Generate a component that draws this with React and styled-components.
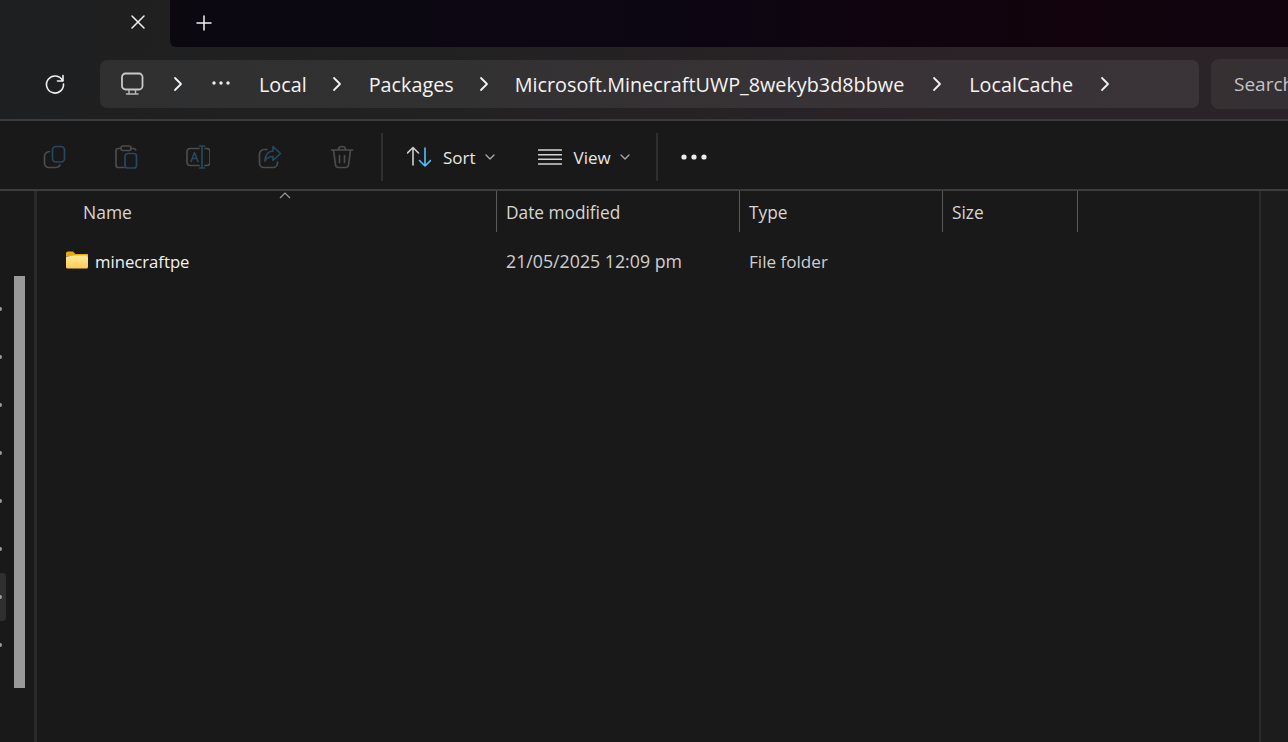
import React from 'react';
import styled, { createGlobalStyle } from 'styled-components';

const GRAY = '#4c4c4c';
const BLUE = '#25495f';
const ACCENT = '#4cc2ff';
const FONT = `'Open Sans', 'Noto Sans', sans-serif`;

const GlobalStyle = createGlobalStyle`
  html, body {
    margin: 0;
    padding: 0;
    height: 100%;
    overflow: hidden;
    background: #191919;
  }
  #root { height: 100%; }
`;

const Window = styled.div`
  width: 1288px;
  height: 742px;
  display: flex;
  flex-direction: column;
  overflow: hidden;
  background: #191919;
  color: #fff;
  font-family: ${FONT};
`;

const Chrome = styled.div`
  display: flex;
  flex-direction: column;
  background: linear-gradient(100deg, #1e1f20 0%, #222122 35%, #2a2327 75%, #2a2428 100%);
  border-bottom: 2px solid #3b3b3b;
`;

const TitleBar = styled.div`
  height: 47px;
  display: flex;
`;

const Tab = styled.div`
  width: 170px;
  display: flex;
  justify-content: flex-end;
  align-items: center;
  padding: 0 24px 3px 0;
  box-sizing: border-box;
`;

const TabStrip = styled.div`
  flex: 1;
  display: flex;
  align-items: center;
  padding: 0 0 1px 26px;
  border-bottom-left-radius: 6px;
  background: linear-gradient(90deg, #0b0810 0%, #0c0612 45%, #12030c 80%, #11040e 100%);
`;

const AddressRow = styled.div`
  height: 72px;
  display: flex;
  align-items: center;
  padding: 2px 0 0 44px;
  box-sizing: border-box;
`;

const RefreshButton = styled.div`
  width: 22px;
  display: flex;
  justify-content: center;
  margin-right: 34px;
`;

const Breadcrumb = styled.div`
  width: 1099px;
  height: 48px;
  margin-right: 12px;
  display: flex;
  align-items: center;
  flex-shrink: 0;
  padding: 0 0 0 20px;
  box-sizing: border-box;
  border-radius: 7px;
  background: rgba(255, 255, 255, 0.075);
`;

const Crumb = styled.span`
  font-size: 19.8px;
  line-height: 28px;
  padding-top: 1px;
  color: #f4f4f4;
  white-space: nowrap;
  margin: ${(p) => p.$margin || '0'};
`;

const SearchBox = styled.div`
  flex: 1;
  height: 50px;
  margin-top: -1px;
  display: flex;
  align-items: center;
  padding: 1px 0 0 23px;
  box-sizing: border-box;
  font-size: 19px;
  color: #c4c2c3;
  white-space: nowrap;
  overflow: hidden;
  border-radius: 8px 0 0 8px;
  background: rgba(255, 255, 255, 0.055);
`;

const Toolbar = styled.div`
  height: 70px;
  display: flex;
  align-items: center;
  padding: 4px 0 0 18px;
  box-sizing: border-box;
  border-bottom: 2px solid #3d3d3d;
  background: #191919;
  flex-shrink: 0;
`;

const IconButton = styled.div`
  width: 72px;
  height: 48px;
  display: flex;
  align-items: center;
  justify-content: center;
`;

const Divider = styled.div`
  width: 2px;
  height: 48px;
  background: #2f2f2f;
  margin: ${(p) => p.$margin};
`;

const MenuButton = styled.div`
  display: flex;
  align-items: center;
  margin-right: ${(p) => p.$right}px;
  font-size: 17px;
  color: #e8e8e8;
`;

const MenuLabel = styled.span`
  margin: 0 9px 0 12px;
`;

const Body = styled.div`
  flex: 1;
  min-height: 0;
  display: flex;
`;

const Sidebar = styled.div`
  width: 34px;
  flex-shrink: 0;
  display: flex;
  overflow: hidden;
`;

const DotRail = styled.div`
  width: 14px;
  padding-top: 94px;
  display: flex;
  flex-direction: column;
`;

const RailItem = styled.div`
  width: 6px;
  height: 48px;
  display: flex;
  align-items: center;
  border-radius: 0 3px 3px 0;
  background: ${(p) => (p.$active ? '#2f2f2f' : 'transparent')};
`;

const RailDot = styled.div`
  width: 4px;
  height: 4px;
  margin-left: -2px;
  border-radius: 50%;
  background: #9aa0a3;
`;

const ScrollThumb = styled.div`
  width: 11px;
  height: 412px;
  margin-top: 85px;
  background: #999;
`;

const Panel = styled.div`
  width: 1222px;
  flex-shrink: 0;
  display: flex;
  flex-direction: column;
  border-left: 3px solid #2a2a2a;
  border-right: 2px solid #2a2a2a;
`;

const Columns = styled.div`
  display: grid;
  grid-template-columns: 460px 243px 203px 135px;
`;

const HeaderCell = styled.div`
  position: relative;
  height: 41px;
  display: flex;
  align-items: center;
  box-sizing: border-box;
  padding: ${(p) => p.$top || 0}px 0 0 ${(p) => p.$pad}px;
  border-right: 1px solid #5a5a5a;
  font-size: ${(p) => p.$size || 17.3}px;
  color: #d6d6d6;
`;

const SortCaret = styled.svg`
  position: absolute;
  top: 1px;
  left: 242px;
`;

const FileCell = styled.div`
  height: 58px;
  display: flex;
  align-items: center;
  padding-left: ${(p) => p.$pad}px;
  font-size: ${(p) => p.$size}px;
  color: ${(p) => p.$color};
  white-space: nowrap;
`;

const FolderName = styled.span`
  margin-left: 7px;
`;

const FolderMark = styled.div`
  display: flex;
  margin-top: -3px;
`;

const Rest = styled.div`
  flex: 1;
  background: #1c1c1c;
`;

const Glyph = ({ w = 24, h = 24, children, ...rest }) => (
  <svg width={w} height={h} viewBox={`0 0 ${w} ${h}`} fill="none" strokeLinecap="round" strokeLinejoin="round" {...rest}>
    {children}
  </svg>
);

const Chevron = ({ margin }) => (
  <Glyph w={10} h={16} style={{ margin }}>
    <path d="M2 2l6 6-6 6" stroke="#f2f2f2" strokeWidth="1.8" />
  </Glyph>
);

const MoreCrumb = () => (
  <Glyph w={20} h={6} style={{ margin: '0 0 3px 28px' }}>
    <circle cx="3" cy="3" r="1.7" fill="#eee" />
    <circle cx="10" cy="3" r="1.7" fill="#eee" />
    <circle cx="17" cy="3" r="1.7" fill="#eee" />
  </Glyph>
);

const PcIcon = () => (
  <Glyph w={24} h={24}>
    <rect x="2" y="1.5" width="20.5" height="16" rx="3.5" stroke="#c9c9c9" strokeWidth="1.8" />
    <path d="M9 18v3M15.5 18v3M6.5 22h11.5" stroke="#b8b8b8" strokeWidth="1.5" />
  </Glyph>
);

const CopyIcon = () => (
  <Glyph>
    <rect x="10.5" y="1.5" width="12" height="15.5" rx="3.5" stroke={BLUE} strokeWidth="1.7" />
    <path d="M7.5 6.5C4.5 7 2.5 8.8 2.5 11.5v6.5c0 2.5 1.8 4.5 4.5 4.5h6.5c2.5 0 4-1.2 4.5-2.5" stroke={GRAY} strokeWidth="1.7" />
  </Glyph>
);

const PasteIcon = () => (
  <Glyph>
    <path d="M7 3.5H4.5c-1.5 0-2.5 1-2.5 2.5v14c0 1.5 1 2.5 2.5 2.5H10M17 3.5h2.5c1 0 1.8.5 2.2 1.3" stroke={GRAY} strokeWidth="1.7" />
    <rect x="7" y="1" width="10" height="4.5" rx="2" stroke={GRAY} strokeWidth="1.6" />
    <rect x="11" y="8.5" width="11.5" height="14.5" rx="2.8" stroke={BLUE} strokeWidth="1.7" />
  </Glyph>
);

const RenameIcon = () => (
  <Glyph>
    <path d="M13 3.5H4.5C2.5 3.5 1 5 1 7v10c0 2 1.5 3.5 3.5 3.5H13M19 3.5h1.5c2 0 3.5 1.5 3.5 3.5v10c0 2-1.5 3.5-3.5 3.5H19" stroke={GRAY} strokeWidth="1.7" />
    <path d="M16 1v22M13.5 23h5M13.5 1h5" stroke={BLUE} strokeWidth="1.7" />
    <path d="M5 16.5L8.5 7.5 12 16.5M6.2 13.5h4.6" stroke={BLUE} strokeWidth="1.6" />
  </Glyph>
);

const ShareIcon = () => (
  <Glyph>
    <path d="M9 4.5H6C3.5 4.5 1.5 6.5 1.5 9v9c0 2.5 2 4.5 4.5 4.5h9c2.500 0 4.500-2 4.500-4.500v-1" stroke={GRAY} strokeWidth="1.7" />
    <path d="M15 1.5l7.500 7-7.500 7V11.500c-4 0-6.500 1.500-8 4.500 0-6 3-9.500 8-10z" stroke={BLUE} strokeWidth="1.7" />
  </Glyph>
);

const TrashIcon = () => (
  <Glyph>
    <path d="M1.5 5h21M8.5 4.5C8.5 2.5 10 1.5 12 1.5s3.5 1 3.5 3M3.5 5l2 15c.2 1.5 1.5 2.5 3 2.5h7c1.5 0 2.8-1 3-2.5l2-15M9.5 10.5v7M14.5 10.5v7" stroke={GRAY} strokeWidth="1.7" />
  </Glyph>
);

const SortIcon = () => (
  <Glyph>
    <path d="M6 20V2.5M.5 8L6 2.5 11.5 8" stroke="#cfcfcf" strokeWidth="1.6" />
    <path d="M18 3v18M12.5 15.5L18 21l5.5-5.5" stroke={ACCENT} strokeWidth="1.6" />
  </Glyph>
);

const ViewIcon = () => (
  <Glyph>
    <path d="M.5 5h23M.5 9.7h23M.5 14.3h23M.5 19h23" stroke="#d4d4d4" strokeWidth="1.5" />
  </Glyph>
);

const Caret = () => (
  <Glyph w={10} h={6}>
    <path d="M1 1l4 4 4-4" stroke="#aaa" strokeWidth="1.3" />
  </Glyph>
);

const FolderIcon = () => (
  <Glyph w={22} h={18}>
    <path d="M0 2.5C0 1.3.8.5 2 .5h5L9.5 3H22v2H0z" fill="#e8a80f" />
    <path d="M0 5.5L9 4.500h11.500c.9 0 1.500.6 1.500 1.500v10c0 .9-.6 1.500-1.500 1.500h-19C.6 17.500 0 16.900 0 16z" fill="url(#folderFill)" />
    <defs>
      <linearGradient id="folderFill" x1="0" y1="0" x2="0" y2="1">
        <stop offset="0" stopColor="#ffe999" />
        <stop offset="1" stopColor="#fccb55" />
      </linearGradient>
    </defs>
  </Glyph>
);

const railItems = [0, 1, 2, 3, 4, 5, 6, 7];

export default function App() {
  return (
    <Window>
      <GlobalStyle />
      <Chrome>
        <TitleBar>
          <Tab>
            <Glyph w={16} h={16}>
              <path d="M2 2l12 12M14 2L2 14" stroke="#f2f2f2" strokeWidth="1.5" />
            </Glyph>
          </Tab>
          <TabStrip>
            <Glyph w={16} h={16}>
              <path d="M8 1v14M1 8h14" stroke="#f2f2f2" strokeWidth="1.5" />
            </Glyph>
          </TabStrip>
        </TitleBar>
        <AddressRow>
          <RefreshButton>
            <Glyph w={22} h={22}>
              <path d="M18.5 7.5A8.5 8.5 0 1 0 19.5 11" stroke="#efefef" strokeWidth="1.6" />
              <path d="M19 2.5V8h-5.500" stroke="#efefef" strokeWidth="1.6" />
            </Glyph>
          </RefreshButton>
          <Breadcrumb>
            <PcIcon />
            <Chevron margin="0 0 0 29px" />
            <MoreCrumb />
            <Crumb $margin="0 0 0 28px">Local</Crumb>
            <Chevron margin="0 0 0 25px" />
            <Crumb $margin="0 0 0 27px">Packages</Crumb>
            <Chevron margin="0 0 0 25px" />
            <Crumb $margin="0 0 0 26px">Microsoft.MinecraftUWP_8wekyb3d8bbwe</Crumb>
            <Chevron margin="0 0 0 28px" />
            <Crumb $margin="0 0 0 27px">LocalCache</Crumb>
            <Chevron margin="0 0 0 27px" />
          </Breadcrumb>
          <SearchBox>Search</SearchBox>
        </AddressRow>
      </Chrome>
      <Toolbar>
        <IconButton><CopyIcon /></IconButton>
        <IconButton><PasteIcon /></IconButton>
        <IconButton><RenameIcon /></IconButton>
        <IconButton><ShareIcon /></IconButton>
        <IconButton><TrashIcon /></IconButton>
        <Divider $margin="0 24px 0 3px" />
        <MenuButton $right={43}>
          <SortIcon />
          <MenuLabel>Sort</MenuLabel>
          <Caret />
        </MenuButton>
        <MenuButton $right={26}>
          <ViewIcon />
          <MenuLabel>View</MenuLabel>
          <Caret />
        </MenuButton>
        <Divider $margin="0 23px 0 0" />
        <Glyph w={26} h={6}>
          <circle cx="3" cy="3" r="2.6" fill="#eee" />
          <circle cx="13" cy="3" r="2.6" fill="#eee" />
          <circle cx="23" cy="3" r="2.6" fill="#eee" />
        </Glyph>
      </Toolbar>
      <Body>
        <Sidebar>
          <DotRail>
            {railItems.map((i) => (
              <RailItem key={i} $active={i === 6}>
                <RailDot />
              </RailItem>
            ))}
          </DotRail>
          <ScrollThumb />
        </Sidebar>
        <Panel>
          <Columns>
            <HeaderCell $pad={46} $size={17.5}>
              Name
              <SortCaret width="12" height="7" viewBox="0 0 12 7" fill="none">
                <path d="M1 6l5-5 5 5" stroke="#9a9a9a" strokeWidth="1.2" />
              </SortCaret>
            </HeaderCell>
            <HeaderCell $pad={9} $top={1}>Date modified</HeaderCell>
            <HeaderCell $pad={9} $top={1}>Type</HeaderCell>
            <HeaderCell $pad={9} $top={1}>Size</HeaderCell>
          </Columns>
          <Columns>
            <FileCell $pad={29} $size={16.7} $color="#f2f2f2">
              <FolderMark><FolderIcon /></FolderMark>
              <FolderName>minecraftpe</FolderName>
            </FileCell>
            <FileCell $pad={9} $size={17.75} $color="#cfcfcf">21/05/2025 12:09 pm</FileCell>
            <FileCell $pad={9} $size={17.1} $color="#cfcfcf">File folder</FileCell>
          </Columns>
        </Panel>
        <Rest />
      </Body>
    </Window>
  );
}
